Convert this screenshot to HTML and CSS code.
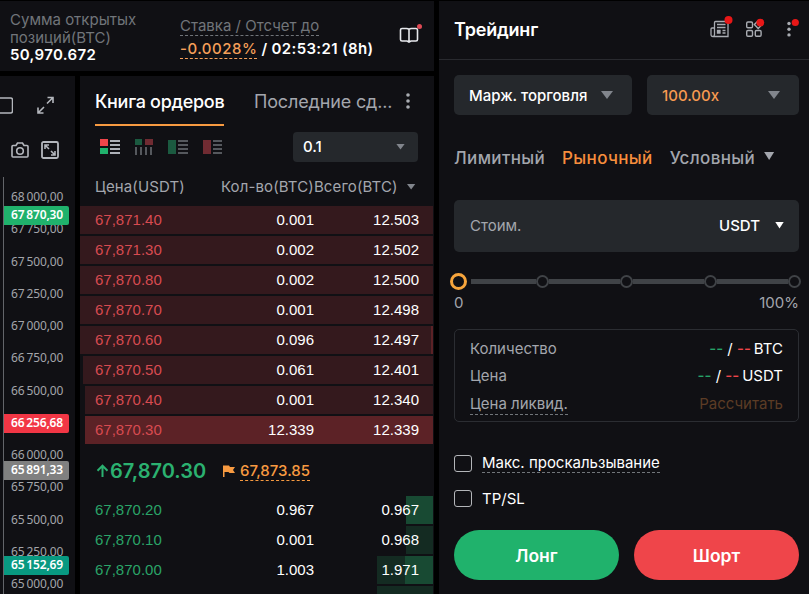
FILE: index.html
```
<!DOCTYPE html>
<html lang="ru">
<head>
    <meta charset="UTF-8">
    <meta name="viewport" content="width=device-width, initial-scale=1.0">
    <title>Трейдинг</title>
    <link rel="stylesheet" href="styles.css">
</head>
<body>
<div class="app">
    <div class="market">
        <div class="stats">
            <div class="open-interest">
                <div class="stat-label">Сумма открытых<br>позиций(BTC)</div>
                <div class="stat-value">50,970.672</div>
            </div>
            <div class="funding">
                <div class="stat-label"><span class="dashed">Ставка / Отсчет до</span></div>
                <div class="stat-value"><span class="rate">-0.0028%</span><span class="countdown"> / 02:53:21 (8h)</span></div>
            </div>
            <svg class="guide" width="26" height="26" viewBox="0 0 26 26" fill="none">
                <path d="M13 8.500Q12 7.500 10.500 7.500H6Q4.500 7.500 4.500 9V18.500Q4.500 20 6 20H11L13 21L15 20H20Q21.500 20 21.500 18.500V9Q21.500 7.500 20 7.500H15.500Q14 7.500 13 8.500V20" stroke="#e6e8ec" stroke-width="1.6"/>
                <circle cx="23.500" cy="5.500" r="2.500" fill="#e04a55"/>
            </svg>
        </div>

        <div class="columns">
            <div class="chart-side">
                <div class="tools">
                    <div class="tool-row">
                        <svg width="13" height="18" viewBox="0 0 13 18" fill="none" stroke="#b4b7bd" stroke-width="1.5"><rect x="-4" y="2" width="16.500" height="15" rx="2"/></svg>
                        <svg width="17" height="18" viewBox="0 0 17 18" fill="none" stroke="#b4b7bd" stroke-width="1.6"><path d="M10.500 1.500H16V7M16 1.500L10 7.500M6.500 17H1V11.500M1 17L7 11"/></svg>
                    </div>
                    <div class="tool-row second">
                        <svg width="18" height="18" viewBox="0 0 18 18" fill="none" stroke="#b4b7bd" stroke-width="1.600"><path d="M1 5.500Q1 4.500 2 4.500H5L6.500 2H11.500L13 4.500H16Q17 4.500 17 5.500V15Q17 16 16 16H2Q1 16 1 15Z"/><circle cx="9" cy="10" r="3.300"/></svg>
                        <svg width="18" height="18" viewBox="0 0 18 18" fill="none" stroke="#b4b7bd" stroke-width="1.800"><rect x="1" y="1" width="16" height="16" rx="1.500"/><path d="M4 8V4H8M4 4L8 8M14 10V14H10M14 14L10 10" stroke-width="1.600"/></svg>
                    </div>
                </div>
                <div class="axis">
                    <div class="tick">68&#8201;000,00</div>
                    <div class="tick">67&#8201;750,00</div>
                    <div class="tick">67&#8201;500,00</div>
                    <div class="tick">67&#8201;250,00</div>
                    <div class="tick">67&#8201;000,00</div>
                    <div class="tick">66&#8201;750,00</div>
                    <div class="tick">66&#8201;500,00</div>
                    <div class="tick"></div>
                    <div class="tick">66&#8201;000,00</div>
                    <div class="tick">65&#8201;750,00</div>
                    <div class="tick">65&#8201;500,00</div>
                    <div class="tick">65&#8201;250,00</div>
                    <div class="tick">65&#8201;000,00</div>
                    <div class="tag tag-last">67&#8201;870,30</div>
                    <div class="tag tag-red">66&#8201;256,68</div>
                    <div class="tag tag-gray">65&#8201;891,33</div>
                    <div class="tag tag-teal">65&#8201;152,69</div>
                </div>
            </div>

            <div class="book">
                <div class="book-tabs">
                    <div class="book-tab active">Книга ордеров</div>
                    <div class="book-tab recent">Последние сд...</div>
                    <svg width="6" height="18" viewBox="0 0 6 18" fill="#a9acb2"><circle cx="3" cy="3" r="1.800"/><circle cx="3" cy="9" r="1.800"/><circle cx="3" cy="15" r="1.800"/></svg>
                </div>
                <div class="book-bar">
                    <svg width="20" height="16" viewBox="0 0 20 16"><path fill="#ef454a" d="M0 0H8V7H0Z"/><path fill="#20b26c" d="M0 9H8V15H0Z"/><path fill="#adb1b8" d="M10 1H20V3H10ZM10 5H20V7H10ZM10 9H20V11H10ZM10 13H20V15H10Z"/></svg>
                    <svg width="20" height="16" viewBox="0 0 20 16"><path fill="#1b5a40" d="M1 0H8V6H1Z"/><path fill="#702b32" d="M11 0H19V6H11Z"/><path fill="#55585d" d="M1 8H3V16H1ZM6 8H8V16H6ZM11 8H13V16H11ZM16 8H18V16H16Z"/></svg>
                    <svg width="20" height="16" viewBox="0 0 20 16"><path fill="#1b5a40" d="M0 1H8V15H0Z"/><path fill="#55585d" d="M10 1H20V3H10ZM10 5H20V7H10ZM10 9H20V11H10ZM10 13H20V15H10Z"/></svg>
                    <svg width="20" height="16" viewBox="0 0 20 16"><path fill="#702b32" d="M1 1H9V15H1Z"/><path fill="#55585d" d="M11 1H20V3H11ZM11 5H20V7H11ZM11 9H20V11H11ZM11 13H20V15H11Z"/></svg>
                    <div class="step"><span>0.1</span><i class="caret small"></i></div>
                </div>
                <div class="book-head">
                    <span class="head-price">Цена(USDT)</span>
                    <span>Кол-во(BTC)</span><span>Всего(BTC)</span>
                    <i class="caret small"></i>
                </div>
                <div class="row ask"><i class="depth" style="width: 353px"></i><span>67,871.40</span><span>0.001</span><span>12.503</span></div>
                <div class="row ask"><i class="depth" style="width: 353px"></i><span>67,871.30</span><span>0.002</span><span>12.502</span></div>
                <div class="row ask"><i class="depth" style="width: 353px"></i><span>67,870.80</span><span>0.002</span><span>12.500</span></div>
                <div class="row ask"><i class="depth" style="width: 353px"></i><span>67,870.70</span><span>0.001</span><span>12.498</span></div>
                <div class="row ask"><i class="depth" style="width: 353px"></i><i class="depth strong" style="width: 2px"></i><span>67,870.60</span><span>0.096</span><span>12.497</span></div>
                <div class="row ask"><i class="depth" style="width: 350px"></i><span>67,870.50</span><span>0.061</span><span>12.401</span></div>
                <div class="row ask"><i class="depth" style="width: 348px"></i><span>67,870.40</span><span>0.001</span><span>12.340</span></div>
                <div class="row ask"><i class="depth strong" style="width: 348px"></i><span>67,870.30</span><span>12.339</span><span>12.339</span></div>
                <div class="last">
                    <svg width="13" height="14" viewBox="0 0 13 14" fill="none" stroke="#2bb170" stroke-width="2"><path d="M6.500 13V2M1.500 6.700L6.500 1.700L11.500 6.700"/></svg>
                    <span class="last-price">67,870.30</span>
                    <svg class="flag" width="12" height="13" viewBox="0 0 12 13" fill="#f79a41"><path d="M0 0.500H6L7 2H12L10 5L12 8H6.500L5.500 7H1.500V12H0Z"/></svg>
                    <span class="mark-price">67,873.85</span>
                </div>
                <div class="row bid"><i class="depth strong" style="width: 27px"></i><span>67,870.20</span><span>0.967</span><span>0.967</span></div>
                <div class="row bid"><i class="depth" style="width: 27px"></i><span>67,870.10</span><span>0.001</span><span>0.968</span></div>
                <div class="row bid"><i class="depth" style="width: 56px"></i><i class="depth strong" style="width: 28px"></i><span>67,870.00</span><span>1.003</span><span>1.971</span></div>
                <div class="row bid"><i class="depth" style="width: 56px"></i></div>
            </div>
        </div>
    </div>

    <div class="trade">
        <div class="trade-head">
            <h1>Трейдинг</h1>
            <div class="trade-icons">
                <svg width="24" height="26" viewBox="0 0 24 26" fill="none" stroke="#a9acb2" stroke-width="1.300"><path d="M4.500 9.500V7.500Q4.500 6.500 5.500 6.500H17Q18 6.500 18 7.500V21.500H3Q1 21.500 1 19.500V14Q1 13 2 13H4.500M4.500 13V19.500Q4.500 21.500 3 21.500M4.500 9V13M7 9.500H15.500M7 12.500H15.500M12.500 15.500H15.500M12.500 18H15.500"/><path fill="#a9acb2" d="M7.500 15.500H10V18H7.500Z"/><circle cx="18.500" cy="5" r="4" fill="#e81717" stroke="none"/></svg>
                <svg width="22" height="26" viewBox="0 0 22 26" fill="none" stroke="#a9acb2" stroke-width="1.400"><rect x="1.700" y="7" width="5.800" height="5.800" rx="1.200"/><rect x="1.700" y="15.500" width="5.800" height="5.800" rx="1.200"/><rect x="10.300" y="15.500" width="5.800" height="5.800" rx="1.200"/><path d="M13.200 5.800L17 9.600L13.200 13.400L9.400 9.600Z"/><circle cx="15.300" cy="7.600" r="3.900" fill="#e81717" stroke="none"/></svg>
                <svg width="14" height="26" viewBox="0 0 14 26"><g fill="#a9acb2"><circle cx="4" cy="8.500" r="1.700"/><circle cx="4" cy="14.200" r="1.700"/><circle cx="4" cy="19.900" r="1.700"/></g><circle cx="10.300" cy="7.500" r="3.600" fill="#e81717"/></svg>
            </div>
        </div>
        <div class="trade-body">
            <div class="selects">
                <div class="select mode"><span>Марж. торговля</span><i class="caret"></i></div>
                <div class="select leverage"><span>100.00x</span><i class="caret"></i></div>
            </div>
            <div class="types">
                <span>Лимитный</span>
                <span class="selected">Рыночный</span>
                <span>Условный</span>
                <i class="caret type-caret"></i>
            </div>
            <div class="amount">
                <span class="placeholder">Стоим.</span>
                <span class="unit">USDT</span>
                <i class="caret unit-caret"></i>
            </div>
            <div class="slider">
                <i class="knob"></i>
                <i class="track first"></i><i class="dot"></i>
                <i class="track"></i><i class="dot"></i>
                <i class="track"></i><i class="dot"></i>
                <i class="track"></i><i class="dot"></i>
            </div>
            <div class="slider-labels"><span>0</span><span>100%</span></div>
            <div class="summary">
                <div class="line"><span>Количество</span><span class="val"><b class="green">--</b> / <b class="red">--</b><em>BTC</em></span></div>
                <div class="line"><span>Цена</span><span class="val"><b class="green">--</b> / <b class="red">--</b><em>USDT</em></span></div>
                <div class="line"><span class="dashed liq">Цена ликвид.</span><span class="calc">Рассчитать</span></div>
            </div>
            <div class="checks">
                <div class="check"><i class="box"></i><span class="dashed">Макс. проскальзывание</span></div>
                <div class="check"><i class="box"></i><span>TP/SL</span></div>
            </div>
            <div class="buttons">
                <button class="long">Лонг</button>
                <button class="short">Шорт</button>
            </div>
        </div>
    </div>
</div>
</body>
</html>
```

FILE: styles.css
```
* {
    box-sizing: border-box;
}
body {
    margin: 0;
    background: #000;
    color: #fff;
    font-family: Inter, "Liberation Sans", sans-serif;
    font-size: 15px;
}
i, em {
    font-style: normal;
}
svg {
    display: block;
    flex: none;
}
.app {
    display: flex;
    gap: 5px;
    width: 809px;
    height: 594px;
    padding-top: 1px;
    overflow: hidden;
}
.market {
    width: 434px;
    display: flex;
    flex-direction: column;
    gap: 5px;
}
.stats {
    display: flex;
    flex: none;
    height: 70px;
    background: #101014;
}
.open-interest {
    width: 180px;
    padding: 10px 0 0 10px;
}
.stat-label {
    color: #71757a;
    line-height: 18px;
    white-space: nowrap;
}
.stat-value {
    font-weight: 600;
    line-height: 16px;
    letter-spacing: 0.35px;
    white-space: nowrap;
}
.dashed {
    border-bottom: 1px dashed #71757a;
}
.funding {
    width: 218px;
    padding-top: 16px;
}
.funding .stat-value {
    margin-top: 4px;
    line-height: 20px;
}
.rate {
    color: #f7a05a;
    font-weight: 500;
    letter-spacing: 0.5px;
    border-bottom: 1px dashed #f7a05a;
}
.countdown {
    white-space: pre;
}
.guide {
    margin-top: 20px;
    margin-left: -2px;
}

/* chart price scale */
.columns {
    display: flex;
    gap: 5px;
    flex: 1;
    min-height: 0;
}
.chart-side {
    width: 75px;
    background: #101014;
}
.tools {
    height: 101px;
    padding-top: 20px;
}
.tool-row {
    display: flex;
    gap: 24px;
}
.tool-row.second {
    gap: 12px;
    margin-top: 27px;
    padding-left: 11px;
}
.axis {
    position: relative;
    height: 417px;
    margin-left: 3px;
    padding-top: 4px;
    border-left: 1px solid #63656a;
    overflow: hidden;
    font-family: "Noto Sans", sans-serif;
    font-size: 12px;
    letter-spacing: -0.1px;
}
.tick {
    height: 32.25px;
    padding-left: 7px;
    line-height: 32px;
    color: #a3a5aa;
}
.tag {
    position: absolute;
    left: 0;
    width: 65px;
    height: 19px;
    padding-left: 7px;
    border-radius: 0 2px 2px 0;
    line-height: 18px;
    font-weight: 600;
    letter-spacing: -0.15px;
}
.tag-last {
    top: 29px;
    background: #20b26c;
}
.tag-red {
    top: 237px;
    background: #f23645;
}
.tag-gray {
    top: 284px;
    background: #808080;
}
.tag-teal {
    top: 379px;
    background: #089981;
}

/* order book */
.book {
    width: 354px;
    background: #101014;
}
.book-tabs {
    display: flex;
    height: 50px;
    padding-left: 15px;
}
.book-tabs svg {
    margin: 16px 0 0 14px;
}
.book-tab {
    font-size: 18px;
    line-height: 51px;
    letter-spacing: -0.15px;
    color: #a3a6ad;
    white-space: nowrap;
}
.book-tab.active {
    width: 129px;
    border-bottom: 2px solid #f79a41;
    color: #fff;
    font-weight: 500;
    letter-spacing: -0.3px;
}
.recent {
    width: 137px;
    margin-left: 30px;
}
.book-bar {
    display: flex;
    align-items: center;
    gap: 14px;
    height: 41px;
    padding-left: 20px;
}
.step {
    display: flex;
    align-items: center;
    justify-content: space-between;
    width: 125px;
    height: 30px;
    margin-left: 57px;
    padding: 0 13px 0 10px;
    border-radius: 4px;
    background: #25282c;
    font-weight: 500;
}
.caret {
    width: 12px;
    height: 8px;
    background: #81858c;
    clip-path: polygon(0 0, 100% 0, 50% 100%);
}
.caret.small {
    width: 9px;
    height: 6px;
}
.book-head {
    display: flex;
    align-items: center;
    height: 39px;
    padding-left: 15px;
    color: #a3a6ad;
    letter-spacing: 0.12px;
    white-space: nowrap;
}
.head-price {
    width: 126px;
}
.book-head .caret {
    margin-left: 9px;
}
.row {
    position: relative;
    display: grid;
    grid-template-columns: 90px 129px 105px;
    height: 28px;
    margin-bottom: 2px;
    padding-left: 15px;
    font-family: "Liberation Sans", Arial, sans-serif;
    line-height: 28px;
}
.row span {
    position: relative;
    text-align: right;
}
.row span:first-of-type {
    text-align: left;
}
.depth {
    position: absolute;
    top: 0;
    right: 1px;
    height: 28px;
}
.ask span:first-of-type {
    color: #d84b51;
}
.ask .depth {
    background: #34191d;
}
.ask .strong {
    background: #5c2226;
}
.bid span:first-of-type {
    color: #2aa468;
}
.bid .depth {
    background: #142b22;
}
.bid .strong {
    background: #184a33;
}
.last {
    display: flex;
    align-items: center;
    height: 50px;
    padding-left: 16px;
}
.last-price {
    width: 97px;
    margin-left: 1px;
    color: #2bb170;
    font-size: 20px;
    font-weight: 600;
}
.flag {
    margin-left: 16px;
}
.mark-price {
    margin-left: 5px;
    color: #f79a41;
    font-weight: 500;
    border-bottom: 1px dashed #f79a41;
}

/* order form */
.trade {
    width: 370px;
    background: #101014;
}
.trade-head {
    display: flex;
    justify-content: space-between;
    height: 59px;
    padding: 0 10px 0 15px;
    border-bottom: 1px solid #292a2f;
}
h1 {
    margin: 0;
    font-size: 18px;
    font-weight: 600;
    line-height: 58px;
    letter-spacing: -0.2px;
}
.trade-icons {
    display: flex;
    gap: 11px;
    padding-top: 14px;
}
.trade-icons svg:nth-child(2) {
    margin-right: 7px;
}
.trade-body {
    padding: 15px 10px 0 15px;
}
.selects {
    display: flex;
    gap: 15px;
}
.select {
    display: flex;
    align-items: center;
    justify-content: space-between;
    height: 40px;
    padding: 0 19px 0 15px;
    border-radius: 5px;
    background: #25282c;
    font-weight: 500;
}
.mode {
    width: 178px;
}
.leverage {
    width: 152px;
    color: #f79a51;
}
.types {
    display: flex;
    gap: 17px;
    height: 85px;
    font-size: 17px;
    font-weight: 500;
    line-height: 86px;
    letter-spacing: 0.35px;
    color: #a3a6ad;
}
.selected {
    color: #f78e3d;
}
.type-caret {
    width: 10px;
    height: 8px;
    margin: 37px 0 0 -8px;
    background: #a3a6ad;
}
.amount {
    display: flex;
    align-items: center;
    height: 52px;
    padding: 0 15px 2px 16px;
    border-radius: 5px;
    background: #25282c;
}
.placeholder {
    flex: 1;
    color: #a3a6ad;
}
.unit {
    font-weight: 500;
}
.unit-caret {
    width: 9px;
    height: 7px;
    margin-left: 15px;
    background: #fff;
}
.slider {
    display: flex;
    align-items: center;
    height: 18px;
    margin: 20px -2px 0 -4px;
}
.knob {
    width: 17px;
    height: 17px;
    margin-right: 4px;
    border: 3px solid #f7a53c;
    border-radius: 50%;
}
.track {
    flex: 1;
    height: 5px;
    background: #404347;
}
.track.first {
    flex: 0 0 65px;
}
.dot {
    width: 13px;
    height: 13px;
    border: 2px solid #404347;
    border-radius: 50%;
}
.slider-labels {
    display: flex;
    justify-content: space-between;
    line-height: 26px;
    color: #a3a6ad;
}
.summary {
    height: 93px;
    margin-top: 13px;
    padding: 5px 15px;
    border: 1px solid #2b2d32;
    border-radius: 5px;
}
.line {
    display: flex;
    justify-content: space-between;
    height: 27px;
    line-height: 27px;
    color: #a3a6ad;
}
.line:last-child {
    padding-top: 1px;
}
.val {
    color: #fff;
}
.val b {
    font-weight: 500;
}
.val em {
    margin-left: 3px;
}
.green {
    color: #26a268;
}
.red {
    color: #ef454a;
}
.liq {
    height: 22px;
    margin-top: 3px;
    line-height: 21px;
}
.calc {
    color: #5c3c25;
}
.checks {
    padding-top: 31px;
}
.check {
    display: flex;
    align-items: center;
    gap: 10px;
    height: 20px;
    margin-bottom: 15px;
}
.check span {
    line-height: 19px;
}
.box {
    width: 18px;
    height: 17px;
    border: 1px solid #b4b6ba;
    border-radius: 3px;
}
.buttons {
    display: flex;
    gap: 15px;
    padding-top: 7px;
}
button {
    width: 165px;
    height: 50px;
    padding: 0;
    border: none;
    border-radius: 25px;
    color: #fff;
    font-family: inherit;
    font-size: 17.5px;
    font-weight: 600;
}
.long {
    background: #20b26c;
}
.short {
    background: #ef454a;
}
```
